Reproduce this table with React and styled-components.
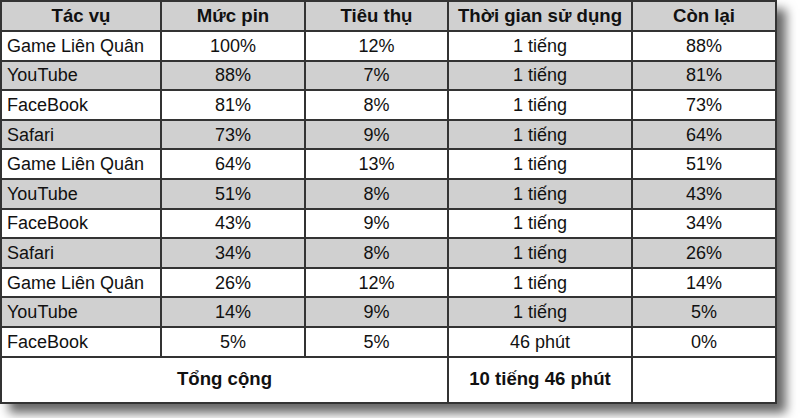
import React from 'react';
import styled, { createGlobalStyle } from 'styled-components';

const GlobalStyle = createGlobalStyle`
  html, body {
    margin: 0;
    padding: 0;
    background: #ffffff;
  }
  body {
    font-family: 'Liberation Sans', Arial, sans-serif;
    width: 800px;
    height: 418px;
    overflow: hidden;
  }
`;

const Page = styled.div`
  padding: 0;
`;

const Table = styled.table`
  border-collapse: collapse;
  table-layout: fixed;
  width: 775px;
  font-family: 'Liberation Sans', Arial, sans-serif;
  font-size: 18px;
  color: #111;
  box-shadow: 9px 9px 10px rgba(0, 0, 0, 0.6);
`;

const Col = styled.col`
  width: ${p => p.$w}px;
`;

const Row = styled.tr`
  height: ${p => p.$h}px;
  background: ${p => (p.$shaded ? '#d0d0d0' : '#ffffff')};
`;

const Head = styled.th`
  border: 2px solid #333;
  font-weight: bold;
  font-size: 18.6px;
  text-align: center;
  padding: 0 4px;
  line-height: 1;
`;

const Cell = styled.td`
  border: 2px solid #333;
  text-align: ${p => (p.$left ? 'left' : 'center')};
  font-weight: ${p => (p.$bold ? 'bold' : 'normal')};
  font-size: ${p => (p.$bold ? '18.6px' : '18px')};
  padding: 0 ${p => (p.$left ? '5px' : '4px')};
  line-height: 1;
  white-space: nowrap;
`;

const rows = [
  ['Game Liên Quân', '100%', '12%', '1 tiếng', '88%'],
  ['YouTube', '88%', '7%', '1 tiếng', '81%'],
  ['FaceBook', '81%', '8%', '1 tiếng', '73%'],
  ['Safari', '73%', '9%', '1 tiếng', '64%'],
  ['Game Liên Quân', '64%', '13%', '1 tiếng', '51%'],
  ['YouTube', '51%', '8%', '1 tiếng', '43%'],
  ['FaceBook', '43%', '9%', '1 tiếng', '34%'],
  ['Safari', '34%', '8%', '1 tiếng', '26%'],
  ['Game Liên Quân', '26%', '12%', '1 tiếng', '14%'],
  ['YouTube', '14%', '9%', '1 tiếng', '5%'],
  ['FaceBook', '5%', '5%', '46 phút', '0%'],
];

const headers = ['Tác vụ', 'Mức pin', 'Tiêu thụ', 'Thời gian sử dụng', 'Còn lại'];
const widths = [160, 144, 143, 184, 144];

export default function App() {
  return (
    <Page>
      <GlobalStyle />
      <Table>
        <colgroup>
          {widths.map((w, i) => <Col key={i} $w={w} />)}
        </colgroup>
        <thead>
          <Row $h={30} $shaded>
            {headers.map(h => <Head key={h}>{h}</Head>)}
          </Row>
        </thead>
        <tbody>
          {rows.map((r, i) => (
            <Row key={i} $h={29.6} $shaded={i % 2 === 1}>
              <Cell $left>{r[0]}</Cell>
              <Cell>{r[1]}</Cell>
              <Cell>{r[2]}</Cell>
              <Cell>{r[3]}</Cell>
              <Cell>{r[4]}</Cell>
            </Row>
          ))}
          <Row $h={46}>
            <Cell colSpan={3} $bold>Tổng cộng</Cell>
            <Cell $bold>10 tiếng 46 phút</Cell>
            <Cell />
          </Row>
        </tbody>
      </Table>
    </Page>
  );
}
